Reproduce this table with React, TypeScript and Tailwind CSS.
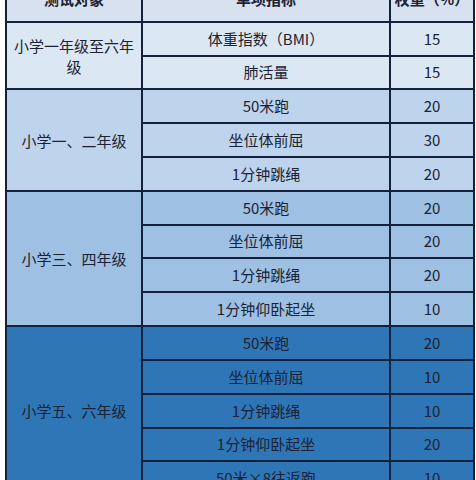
import React from "react";

type Row = { item: string; w: string; h: number };
type Group = { name: string; bg: string; rows: Row[] };

const groups: Group[] = [
  {
    name: "小学一年级至六年级",
    bg: "bg-[#dce7f4]",
    rows: [
      { item: "体重指数（BMI）", w: "15", h: 34 },
      { item: "肺活量", w: "15", h: 33 },
    ],
  },
  {
    name: "小学一、二年级",
    bg: "bg-[#bdd4ec]",
    rows: [
      { item: "50米跑", w: "20", h: 34 },
      { item: "坐位体前屈", w: "30", h: 34 },
      { item: "1分钟跳绳", w: "20", h: 34 },
    ],
  },
  {
    name: "小学三、四年级",
    bg: "bg-[#9dc0e3]",
    rows: [
      { item: "50米跑", w: "20", h: 34 },
      { item: "坐位体前屈", w: "20", h: 33 },
      { item: "1分钟跳绳", w: "20", h: 34 },
      { item: "1分钟仰卧起坐", w: "10", h: 34 },
    ],
  },
  {
    name: "小学五、六年级",
    bg: "bg-[#2f76b7]",
    rows: [
      { item: "50米跑", w: "20", h: 34 },
      { item: "坐位体前屈", w: "10", h: 34 },
      { item: "1分钟跳绳", w: "10", h: 34 },
      { item: "1分钟仰卧起坐", w: "20", h: 33 },
      { item: "50米×8往返跑", w: "10", h: 34 },
    ],
  },
];

const cell = "border-2 border-[#13213d] text-center align-middle p-0";
const head = "border-2 border-[#13213d] text-center align-middle pt-0 pb-[12px] leading-[16px]";

export default function App() {
  return (
    <div
      className="w-[476px] h-[480px] overflow-hidden bg-white text-[15px] text-[#1c2233]"
      style={{ fontFamily: '"Noto Sans CJK SC", "Noto Sans", sans-serif' }}
    >
      <div className="pl-[5px] pr-[3px] -mt-[13px]">
        <table className="border-collapse w-[468px] table-fixed">
          <colgroup>
            <col className="w-[136px]" />
            <col className="w-[248px]" />
            <col className="w-[84px]" />
          </colgroup>
          <tbody>
            <tr className="h-[34px] bg-[#d8e1f0] font-bold">
              <td className={head}>测试对象</td>
              <td className={head}>单项指标</td>
              <td className={head}>权重（%）</td>
            </tr>
            {groups.map((g) =>
              g.rows.map((r, i) => (
                <tr key={g.name + i} className={g.bg} style={{ height: r.h }}>
                  {i === 0 && (
                    <td rowSpan={g.rows.length} className={`${cell} px-[6px] leading-[21px]`}>
                      {g.name}
                    </td>
                  )}
                  <td className={cell}>{r.item}</td>
                  <td className={cell}>{r.w}</td>
                </tr>
              ))
            )}
          </tbody>
        </table>
      </div>
    </div>
  );
}
